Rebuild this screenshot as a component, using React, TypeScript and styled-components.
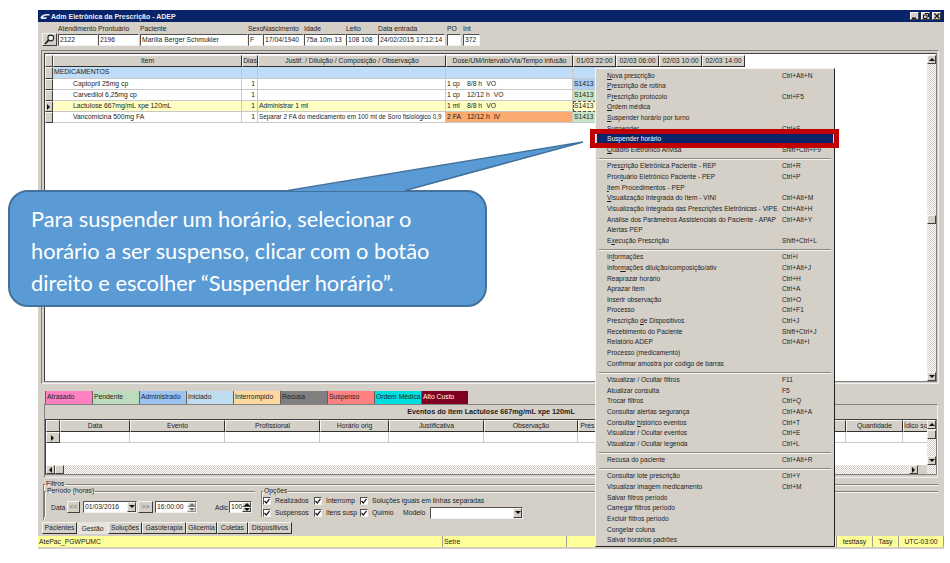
import React from "react";
import styled, { createGlobalStyle, css } from "styled-components";

const GlobalStyle = createGlobalStyle`
  html, body { margin: 0; padding: 0; background: #fff; }
  body { font-family: "Liberation Sans", Arial, sans-serif; font-size: 6.8px; color: #1c1c1c; }
  * { box-sizing: border-box; }
  u { text-decoration: underline; }
`;

const GREY = "#d4d0c8";
const raised = css`
  border: 1px solid;
  border-color: #f4f4f0 #404040 #404040 #f4f4f0;
  background: ${GREY};
`;
const sunken = css`
  border: 1px solid;
  border-color: #505050 #f0f0f0 #f0f0f0 #505050;
  background: #fff;
`;
const dither = css`
  background-color: #fff;
  background-image: conic-gradient(#fff 25%, ${GREY} 0 50%, #fff 0 75%, ${GREY} 0);
  background-size: 2px 2px;
`;

const Page = styled.div`
  position: relative;
  width: 950px;
  height: 563px;
  padding: 10px 0 0 38px;
  overflow: hidden;
`;
const Win = styled.div`
  width: 906px;
  height: 539px;
  background: ${GREY};
  display: flex;
  flex-direction: column;
`;

// title
const TitleBar = styled.div`
  height: 12px;
  background: #0a246a;
  color: #e8ecf8;
  font-weight: 700;
  font-size: 7px;
  display: flex;
  align-items: center;
  padding: 0 3px 0 2px;
  gap: 1px;
`;
const TitleText = styled.span`flex: 1;`;
const WinButtons = styled.div`display: flex; gap: 2px;`;
const WinBtn = styled.div`
  ${raised};
  width: 9px;
  height: 8px;
  display: flex;
  align-items: center;
  justify-content: center;
`;

// header fields
const HeaderPanel = styled.div`
  height: 28px;
  display: flex;
  align-items: flex-end;
  padding: 0 0 4px 4px;
`;
const SearchBtn = styled.div`
  ${raised};
  width: 15px;
  height: 13px;
  margin-right: 1px;
  display: flex;
  align-items: center;
  justify-content: center;
`;
const Field = styled.div<{ $w: number; $ml?: number }>`
  width: ${(p) => p.$w}px;
  margin-left: ${(p) => p.$ml || 0}px;
  display: flex;
  flex-direction: column;
`;
const FieldLabel = styled.span`
  height: 10px;
  line-height: 9px;
  white-space: nowrap;
`;
const FieldValue = styled.div`
  ${sunken};
  height: 12px;
  line-height: 10px;
  padding-left: 1px;
  white-space: nowrap;
  overflow: hidden;
`;

// main grid
const GridFrame = styled.div`
  height: 334px;
  margin: 0 5px 0 3px;
  border: 1px solid;
  border-color: #808080 #f0f0f0 #f0f0f0 #808080;
  padding: 2px 1px 1px 2px;
  display: flex;
`;
const GridInner = styled.div`
  flex: 1;
  min-width: 0;
  display: flex;
  border: 1px solid;
  border-color: #404040 #808080 #808080 #404040;
  background: #fff;
  padding: 1px 0 0 0;
`;
const GridTable = styled.div`
  flex: 1;
  min-width: 0;
  display: flex;
  flex-direction: column;
  overflow: hidden;
`;
const Row = styled.div<{ $h?: number }>`
  display: flex;
  height: ${(p) => p.$h || 11}px;
  flex-shrink: 0;
`;
const HeadCell = styled.div<{ $w: number }>`
  width: ${(p) => p.$w}px;
  flex-shrink: 0;
  background: ${GREY};
  border-top: 1px solid #f4f4f0;
  border-left: 1px solid #f4f4f0;
  border-right: 1px solid #303030;
  border-bottom: 1px solid #303030;
  text-align: center;
  line-height: 10px;
  white-space: nowrap;
  overflow: hidden;
`;
const Indicator = styled.div`
  ${raised};
  width: 8px;
  flex-shrink: 0;
  display: flex;
  align-items: center;
  justify-content: center;
`;
const Cell = styled.div<{ $w: number; $bg?: string; $right?: boolean; $pad?: number; $focus?: boolean; $tight?: boolean }>`
  width: ${(p) => p.$w}px;
  flex-shrink: 0;
  background: ${(p) => p.$bg || "transparent"};
  border-right: 1px solid #c8c8c8;
  border-bottom: 1px solid #c8c8c8;
  padding: 0 ${(p) => (p.$right ? 2 : 0)}px 0 ${(p) => p.$pad ?? 1}px;
  text-align: ${(p) => (p.$right ? "right" : "left")};
  line-height: 10px;
  white-space: nowrap;
  overflow: hidden;
  ${(p) => p.$tight && "font-size: 6.4px;"}
  ${(p) => p.$focus && "outline: 1px dashed #555; outline-offset: -1px;"}
`;
const DoseAmount = styled.span`
  display: inline-block;
  width: 20px;
`;
const DoseFreq = styled.span`
  display: inline-block;
  margin-right: 4px;
`;

// scrollbars
const VScroll = styled.div<{ $w?: number }>`
  ${dither};
  width: ${(p) => p.$w || 9}px;
  flex-shrink: 0;
  display: flex;
  flex-direction: column;
  justify-content: space-between;
  position: relative;
`;
const ScrollBtn = styled.div<{ $w?: number; $h?: number }>`
  ${raised};
  width: ${(p) => p.$w || 9}px;
  height: ${(p) => p.$h || 9}px;
  flex-shrink: 0;
  display: flex;
  align-items: center;
  justify-content: center;
`;
const Thumb = styled(ScrollBtn)<{ $top: number }>`
  position: absolute;
  left: 0;
  top: ${(p) => p.$top}px;
`;
const Arrow = ({ dir }: { dir: "up" | "down" | "left" | "right" }) => {
  const pts = { up: "0,4 3,1 6,4", down: "0,1 3,4 6,1", left: "4,0 1,3 4,6", right: "1,0 4,3 1,6" }[dir];
  return (
    <svg width="6" height="6" viewBox="0 0 6 6">
      <polygon points={pts} fill="#111" />
    </svg>
  );
};

// legend
const LegendRow = styled.div`
  display: flex;
  height: 20px;
  padding: 7px 0 0 7px;
  flex-shrink: 0;
`;
const LegendItem = styled.div<{ $bg: string; $light?: boolean }>`
  width: 47px;
  height: 13px;
  background: ${(p) => p.$bg};
  color: ${(p) => (p.$light ? "#fff" : "#222")};
  line-height: 12px;
  padding-left: 1px;
  border-left: 1px solid #606060;
  white-space: nowrap;
  overflow: hidden;
`;

// events
const EventsPanel = styled.div`
  height: 74px;
  margin: 0 6px 0 6px;
  display: flex;
  flex-direction: column;
  border: 1px solid;
  border-color: #808080 #f0f0f0 #f0f0f0 #808080;
`;
const EventsTitle = styled.div`
  height: 14px;
  font-weight: 700;
  font-size: 7.2px;
  line-height: 13px;
  text-align: center;
`;
const EventsBody = styled.div`
  flex: 1;
  display: flex;
  flex-direction: column;
  border: 1px solid;
  border-color: #404040 #808080 #808080 #404040;
  background: #fff;
  min-height: 0;
  margin-bottom: 2px;
`;
const EventsMain = styled.div`
  flex: 1;
  min-height: 0;
  display: flex;
`;
const EventsTable = styled.div`
  flex: 1;
  min-width: 0;
  overflow: hidden;
`;
const EventIndicator = styled(Indicator)`width: 14px;`;
const HScroll = styled.div`
  ${dither};
  height: 9px;
  flex-shrink: 0;
  display: flex;
  padding-right: 9px;
`;
const HSpacer = styled.div`flex: 1;`;
const HCorner = styled.div`width: 9px; background: ${GREY};`;

// filters
const FilterSet = styled.fieldset`
  margin: 2px 6px 0 5px;
  padding: 0;
  height: 40px;
  border: 0;
  border-top: 1px solid #808080;
  border-left: 1px solid #808080;
  min-width: 0;
  display: flex;
  box-shadow: inset 1px 1px 0 #f4f4f0;
`;
const Legend = styled.legend`
  padding: 0 1px;
  margin-left: 1px;
  line-height: 8px;
  font-size: 6.8px;
`;
const FilterRow = styled.div`
  display: flex;
  gap: 6px;
  flex: 1;
  margin-top: -1px;
`;
const SubSet = styled.fieldset<{ $w?: number }>`
  margin: 0;
  padding: 0;
  border: 0;
  border-top: 1px solid #808080;
  border-left: 1px solid #808080;
  box-shadow: inset 1px 1px 0 #f4f4f0;
  min-width: 0;
  ${(p) => (p.$w ? `width: ${p.$w}px;` : "flex: 1;")}
`;
const PeriodRow = styled.div`
  display: flex;
  align-items: center;
  height: 12px;
  margin-top: 6px;
  padding-left: 6px;
`;
const SmallLabel = styled.span<{ $w: number }>`
  width: ${(p) => p.$w}px;
  flex-shrink: 0;
  white-space: nowrap;
`;
const NavBtn = styled.div<{ $w: number; $mr?: number }>`
  ${raised};
  width: ${(p) => p.$w}px;
  height: 12px;
  margin-right: ${(p) => p.$mr || 0}px;
  flex-shrink: 0;
  color: #666;
  line-height: 10px;
  text-align: center;
`;
const Input = styled.div<{ $w: number; $mr?: number }>`
  ${sunken};
  width: ${(p) => p.$w}px;
  height: 12px;
  margin-right: ${(p) => p.$mr || 0}px;
  flex-shrink: 0;
  line-height: 10px;
  padding-left: 1px;
  display: flex;
  justify-content: space-between;
  white-space: nowrap;
`;
const DropBtn = styled(ScrollBtn)`margin: 0;`;
const Spin = styled.div`
  display: flex;
  flex-direction: column;
  width: 9px;
  flex-shrink: 0;
`;
const SpinPart = styled.div<{ $dim?: boolean }>`
  ${raised};
  height: 5px;
  display: flex;
  align-items: center;
  justify-content: center;
  opacity: ${(p) => (p.$dim ? 0.6 : 1)};
`;
const OptionGrid = styled.div`
  padding: 1px 0 0 1px;
  display: flex;
  flex-direction: column;
  gap: 3px;
`;
const OptionRow = styled.div`
  display: flex;
  align-items: center;
  height: 9px;
`;
const CheckWrap = styled.label<{ $w?: number }>`
  width: ${(p) => (p.$w ? `${p.$w}px` : "auto")};
  display: flex;
  align-items: center;
  gap: 4px;
  white-space: nowrap;
  flex-shrink: 0;
`;
const CheckBox = styled.span`
  ${sunken};
  width: 8px;
  height: 8px;
  display: flex;
  align-items: center;
  justify-content: center;
`;

// tabs and status
const Tabs = styled.div`
  display: flex;
  height: 14px;
  margin-top: 1px;
  padding: 1px 0 0 4px;
  flex-shrink: 0;
`;
const Tab = styled.div<{ $w: number; $active?: boolean }>`
  width: ${(p) => p.$w}px;
  height: 12px;
  text-align: center;
  line-height: ${(p) => (p.$active ? 13 : 10)}px;
  white-space: nowrap;
  ${(p) =>
    p.$active
      ? "background: #e6e4de;"
      : `border: 1px solid; border-color: #f4f4f0 #303030 #303030 #f4f4f0;`}
`;
const StatusBar = styled.div`
  display: flex;
  height: 11px;
  margin-top: 1px;
  background: #ffff99;
  flex-shrink: 0;
`;
const StatusCell = styled.div<{ $w?: number; $right?: boolean; $center?: boolean }>`
  ${(p) => (p.$w ? `width: ${p.$w}px;` : "flex: 1;")}
  border-right: 1px solid #a0a090;
  line-height: 11px;
  padding: 0 1px;
  text-align: ${(p) => (p.$right ? "right" : p.$center ? "center" : "left")};
  white-space: nowrap;
  overflow: hidden;
`;

// context menu
const Menu = styled.div`
  position: absolute;
  left: 595px;
  top: 68px;
  width: 240px;
  height: 479px;
  background: ${GREY};
  border: 1px solid;
  border-color: #f4f4f0 #202020 #202020 #f4f4f0;
  padding: 1.5px 1px 0;
  font-size: 6.6px;
`;
const MenuRow = styled.div<{ $selected?: boolean }>`
  height: 10.67px;
  line-height: 10.67px;
  display: flex;
  padding-left: 10px;
  white-space: nowrap;
  ${(p) => p.$selected && "background: #0a246a; color: #fff;"}
`;
const MenuLabel = styled.span`width: 175px; flex-shrink: 0;`;
const MenuSep = styled.div`
  height: 5.6px;
  margin: 0 2px;
  display: flex;
  align-items: center;
  &::after {
    content: "";
    flex: 1;
    height: 1px;
    background: #8c8a84;
    box-shadow: 0 1px 0 #f4f4f0;
  }
`;
const RedBox = styled.div`
  position: absolute;
  left: 590px;
  top: 129px;
  width: 249px;
  height: 19px;
  border: 5px solid #c00000;
`;

// callout
const Bubble = styled.div`
  position: absolute;
  left: 8px;
  top: 190px;
  width: 479px;
  height: 117px;
  background: #5b9bd5;
  border: 2px solid #41719c;
  border-radius: 20px;
  color: #fff;
  font-family: Lato, "Liberation Sans", sans-serif;
  font-size: 21.8px;
  line-height: 32px;
  padding: 11px 0 0 21px;
  white-space: nowrap;
`;
const Tail = styled.svg`
  position: absolute;
  left: 280px;
  top: 135px;
`;

const mainCols = [189, 16, 188, 127, 43, 43, 43, 43];
const mainHeads = [
  "Item",
  "Dias",
  "Justif. / Diluição / Composição / Observação",
  "Dose/UM/Intervalo/Via/Tempo infusão",
  "01/03 22:00",
  "02/03 06:00",
  "02/03 10:00",
  "02/03 14:00",
];
const meds = [
  { name: "Captopril 25mg cp", just: "", amount: "1 cp", freq: "8/8 h", via: "VO", time: "#a8d0f8", bg: "#fff" },
  { name: "Carvedilol 6,25mg cp", just: "", amount: "1 cp", freq: "12/12 h", via: "VO", time: "#c4e6c8", bg: "#fff" },
  {
    name: "Lactulose 667mg/mL xpe 120mL",
    just: "Administrar 1 ml",
    amount: "1 ml",
    freq: "8/8 h",
    via: "VO",
    time: "#ffffc4",
    bg: "#ffffc4",
    current: true,
  },
  {
    name: "Vancomicina 500mg FA",
    just: "Separar 2 FA do medicamento em 100 ml de Soro fisiológico 0,9",
    amount: "2 FA",
    freq: "12/12 h",
    via: "IV",
    time: "#c4e6c8",
    bg: "#fff",
    doseBg: "#fbaa70",
    tight: true,
  },
];
const legend: [string, string, boolean?][] = [
  ["Atrasado", "#ff80c0"],
  ["Pendente", "#bcdcbc"],
  ["Administrado", "#9cc4f0"],
  ["Iniciado", "#c0dcf0"],
  ["Interrompido", "#ffd8a0"],
  ["Recusa", "#808080"],
  ["Suspenso", "#ff8080"],
  ["Ordem Médica", "#00e0e0"],
  ["Alto Custo", "#800020", true],
];
const eventCols: [string, number][] = [
  ["Data", 70],
  ["Evento", 95],
  ["Profissional", 95],
  ["Horário orig", 69],
  ["Justificativa", 95],
  ["Observação", 94],
  ["Pres", 19],
  ["", 170],
  ["M", 79],
  ["Quantidade", 57],
  ["Ídico so", 25],
];
const tabs: [string, number][] = [
  ["Pacientes", 35],
  ["Gestão", 31],
  ["Soluções", 34],
  ["Gasoterapia", 44],
  ["Glicemia", 31],
  ["Coletas", 31],
  ["Dispositivos", 44],
];
const headerFields: [string, string, number, number?][] = [
  ["Atendimento", "2122", 40],
  ["Prontuário", "2196", 41],
  ["Paciente", "Marília Berger Schmukler", 108, 1],
  ["Sexo", "F", 15],
  ["Nascimento", "17/04/1940", 41],
  ["Idade", "75a 10m 13", 42],
  ["Leito", "108 108", 32],
  ["Data entrada", "24/02/2015 17:12:14", 67],
  ["PO", "", 14, 2],
  ["Int", "372", 17, 2],
];

type MenuEntry = [string, string?] | null;
const menu: MenuEntry[] = [
  ["&Nova prescrição", "Ctrl+Alt+N"],
  ["&Prescrição de rotina"],
  ["P&rescrição protocolo", "Ctrl+F5"],
  ["&Ordem médica"],
  ["&Suspender horário por turno"],
  ["Suspender", "Ctrl+S"],
  ["Suspender horário"],
  ["&Quadro Eletrônico Anvisa", "Shift+Ctrl+F9"],
  null,
  ["Pres&crição Eletrônica Paciente - REP", "Ctrl+R"],
  ["Pron&tuário Eletrônico Paciente - PEP", "Ctrl+P"],
  ["&Item Procedimentos - PEP"],
  ["&Visualização Integrada do Item - VINI", "Ctrl+Alt+M"],
  ["Visualização Integrada das Prescrições Eletrônicas - VIPE", "Ctrl+Alt+H"],
  ["Análise dos Parâmetros Assistenciais do Paciente - APAP", "Ctrl+Alt+Y"],
  ["Alertas PEP"],
  ["E&xecução Prescrição", "Shift+Ctrl+L"],
  null,
  ["In&formações", "Ctrl+I"],
  ["Infor&mações diluição/composição/ativ", "Ctrl+Alt+J"],
  ["Reaprazar horário", "Ctrl+H"],
  ["Aprazar item", "Ctrl+A"],
  ["Inserir observação", "Ctrl+O"],
  ["Processo", "Ctrl+F1"],
  ["Prescrição &de Dispositivos", "Ctrl+J"],
  ["Recebimento do Paciente", "Shift+Ctrl+J"],
  ["Relatório ADEP", "Ctrl+Alt+I"],
  ["Processo (medicamento)"],
  ["Confirmar amostra por código de barras"],
  null,
  ["Visualizar / Ocultar filtros", "F11"],
  ["Atualizar consulta", "F5"],
  ["Trocar filtros", "Ctrl+Q"],
  ["Consultar alertas segurança", "Ctrl+Alt+A"],
  ["Consultar &histórico eventos", "Ctrl+T"],
  ["Visualizar / Ocultar eventos", "Ctrl+E"],
  ["Visualizar / Ocultar legenda", "Ctrl+L"],
  null,
  ["Recusa do paciente", "Ctrl+Alt+R"],
  null,
  ["Consultar lote prescrição", "Ctrl+Y"],
  ["Visualizar imagem medicamento", "Ctrl+M"],
  ["Salvar filtros período"],
  ["Carregar filtros período"],
  ["Excluir filtros período"],
  ["Congelar coluna"],
  ["Salvar horários padrões"],
];

function mnemonic(label: string) {
  const i = label.indexOf("&");
  if (i < 0) return label;
  return (
    <>
      {label.slice(0, i)}
      <u>{label[i + 1]}</u>
      {label.slice(i + 2)}
    </>
  );
}

function Check({ label, w }: { label: string; w?: number }) {
  return (
    <CheckWrap $w={w}>
      <CheckBox>
        <svg width="6" height="6" viewBox="0 0 6 6">
          <path d="M0.5 3 L2.3 5 L5.5 0.8" fill="none" stroke="#111" strokeWidth="1.2" />
        </svg>
      </CheckBox>
      {label}
    </CheckWrap>
  );
}

export default function App() {
  return (
    <Page>
      <GlobalStyle />
      <Win>
        <TitleBar>
          <svg width="10" height="7" viewBox="0 0 10 7">
            <path d="M0.5 4 C2 1.5 5 1 9.5 1 L9.5 2.6 C6 2.6 4 3 3 4.2 L7 4.2 L6 6 L1 6 Z" fill="#e8ecf8" />
          </svg>
          <TitleText>Adm Eletrônica da Prescrição - ADEP</TitleText>
          <WinButtons>
            <WinBtn>
              <svg width="5" height="5" viewBox="0 0 5 5"><rect x="0" y="3.5" width="4" height="1.5" fill="#111" /></svg>
            </WinBtn>
            <WinBtn>
              <svg width="6" height="6" viewBox="0 0 6 6"><path d="M2 0.5h3.5v3.5M0.5 2h3.5v3.5h-3.5z" fill="none" stroke="#111" /></svg>
            </WinBtn>
            <WinBtn>
              <svg width="6" height="6" viewBox="0 0 6 6"><path d="M0.5 0.5L5.5 5.5M5.5 0.5L0.5 5.5" stroke="#111" strokeWidth="1.2" /></svg>
            </WinBtn>
          </WinButtons>
        </TitleBar>

        <HeaderPanel>
          <SearchBtn>
            <svg width="11" height="11" viewBox="0 0 11 11">
              <circle cx="6.8" cy="4" r="2.9" fill="#f4f4f0" stroke="#222" strokeWidth="1.1" />
              <path d="M4.6 6.2 L1 10" stroke="#222" strokeWidth="1.8" />
            </svg>
          </SearchBtn>
          {headerFields.map(([label, value, w, ml]) => (
            <Field key={label} $w={w} $ml={ml}>
              <FieldLabel>{label}</FieldLabel>
              <FieldValue>{value}</FieldValue>
            </Field>
          ))}
        </HeaderPanel>

        <GridFrame>
          <GridInner>
            <GridTable>
              <Row $h={12}>
                <Indicator />
                {mainHeads.map((h, i) => (
                  <HeadCell key={h} $w={mainCols[i]}>{h}</HeadCell>
                ))}
              </Row>
              <Row $h={12}>
                <Indicator />
                <Cell $w={189} $bg="#bfdcf8">MEDICAMENTOS</Cell>
                <Cell $w={16} $bg="#bfdcf8" />
                <Cell $w={188} $bg="#bfdcf8" />
                <Cell $w={127} $bg="#bfdcf8" />
                <Cell $w={43} $bg="#bfdcf8" />
              </Row>
              {meds.map((m) => (
                <Row key={m.name} $h={11}>
                  <Indicator>{m.current && <Arrow dir="right" />}</Indicator>
                  <Cell $w={189} $bg={m.bg} $pad={20}>{m.name}</Cell>
                  <Cell $w={16} $bg={m.bg} $right>1</Cell>
                  <Cell $w={188} $bg={m.bg} $tight={m.tight}>{m.just}</Cell>
                  <Cell $w={127} $bg={m.doseBg || m.bg}>
                    <DoseAmount>{m.amount}</DoseAmount>
                    <DoseFreq>{m.freq}</DoseFreq>
                    {m.via}
                  </Cell>
                  <Cell $w={43} $bg={m.time} $focus={m.current}>S1413</Cell>
                </Row>
              ))}
            </GridTable>
            <VScroll>
              <ScrollBtn><Arrow dir="up" /></ScrollBtn>
              <Thumb $top={160} />
              <ScrollBtn><Arrow dir="down" /></ScrollBtn>
            </VScroll>
          </GridInner>
        </GridFrame>

        <LegendRow>
          {legend.map(([label, bg, light]) => (
            <LegendItem key={label} $bg={bg} $light={light}>{label}</LegendItem>
          ))}
        </LegendRow>

        <EventsPanel>
          <EventsTitle>Eventos do item Lactulose 667mg/mL xpe 120mL</EventsTitle>
          <EventsBody>
            <EventsMain>
              <EventsTable>
                <Row $h={12}>
                  <EventIndicator />
                  {eventCols.map(([h, w], i) => (
                    <HeadCell key={i} $w={w}>{h}</HeadCell>
                  ))}
                </Row>
                <Row $h={11}>
                  <EventIndicator><Arrow dir="right" /></EventIndicator>
                  {eventCols.map(([, w], i) => (
                    <Cell key={i} $w={w} />
                  ))}
                </Row>
              </EventsTable>
              <VScroll>
                <ScrollBtn><Arrow dir="up" /></ScrollBtn>
                <Thumb $top={10} />
                <ScrollBtn><Arrow dir="down" /></ScrollBtn>
              </VScroll>
            </EventsMain>
            <HScroll>
              <ScrollBtn><Arrow dir="left" /></ScrollBtn>
              <ScrollBtn />
              <HSpacer />
              <ScrollBtn><Arrow dir="right" /></ScrollBtn>
              <HCorner />
            </HScroll>
          </EventsBody>
        </EventsPanel>

        <FilterSet>
          <Legend>Filtros</Legend>
          <FilterRow>
            <SubSet $w={211}>
              <Legend>Período (horas)</Legend>
              <PeriodRow>
                <SmallLabel $w={16}>Data</SmallLabel>
                <NavBtn $w={13} $mr={3}>&lt;&lt;</NavBtn>
                <Input $w={54} $mr={1}>
                  01/03/2016
                  <DropBtn $h={10}><Arrow dir="down" /></DropBtn>
                </Input>
                <NavBtn $w={15} $mr={2}>&gt;&gt;</NavBtn>
                <Input $w={42} $mr={18}>
                  16:00:00
                  <Spin>
                    <SpinPart $dim><Arrow dir="up" /></SpinPart>
                    <SpinPart $dim><Arrow dir="down" /></SpinPart>
                  </Spin>
                </Input>
                <SmallLabel $w={14}>Adic</SmallLabel>
                <Input $w={23}>
                  100
                  <Spin>
                    <SpinPart><Arrow dir="up" /></SpinPart>
                    <SpinPart><Arrow dir="down" /></SpinPart>
                  </Spin>
                </Input>
              </PeriodRow>
            </SubSet>
            <SubSet>
              <Legend>Opções</Legend>
              <OptionGrid>
                <OptionRow>
                  <Check label="Realizados" w={51} />
                  <Check label="Interromp" w={46} />
                  <Check label="Soluções iguais em linhas separadas" />
                </OptionRow>
                <OptionRow>
                  <Check label="Suspensos" w={51} />
                  <Check label="Itens susp" w={46} />
                  <Check label="Quimio" w={43} />
                  <SmallLabel $w={27}>Modelo</SmallLabel>
                  <Input $w={93}>
                    <span />
                    <DropBtn $h={10}><Arrow dir="down" /></DropBtn>
                  </Input>
                </OptionRow>
              </OptionGrid>
            </SubSet>
          </FilterRow>
        </FilterSet>

        <Tabs>
          {tabs.map(([t, w]) => (
            <Tab key={t} $w={w} $active={t === "Gestão"}>{t}</Tab>
          ))}
        </Tabs>

        <StatusBar>
          <StatusCell $w={405}>AtePac_PGWPUMC</StatusCell>
          <StatusCell $w={124}>Setre</StatusCell>
          <StatusCell $w={270} $right>m</StatusCell>
          <StatusCell $w={36} $center>testtasy</StatusCell>
          <StatusCell $w={26} $center>Tasy</StatusCell>
          <StatusCell $center>UTC-03:00</StatusCell>
        </StatusBar>
      </Win>

      <Menu>
        {menu.map((entry, i) =>
          entry ? (
            <MenuRow key={i} $selected={entry[0] === "Suspender horário"}>
              <MenuLabel>{mnemonic(entry[0])}</MenuLabel>
              <span>{entry[1]}</span>
            </MenuRow>
          ) : (
            <MenuSep key={i} />
          )
        )}
      </Menu>
      <RedBox />

      <Bubble>
        Para suspender um horário, selecionar o
        <br />
        horário a ser suspenso, clicar com o botão
        <br />
        direito e escolher “Suspender horário”.
      </Bubble>
      <Tail width="310" height="58" viewBox="0 0 310 58">
        <polygon points="8,56 303,7 125,56" fill="#5b9bd5" />
        <path d="M8 55.5 L303 7 L125 55.5" fill="none" stroke="#41719c" strokeWidth="1.5" />
      </Tail>
    </Page>
  );
}
